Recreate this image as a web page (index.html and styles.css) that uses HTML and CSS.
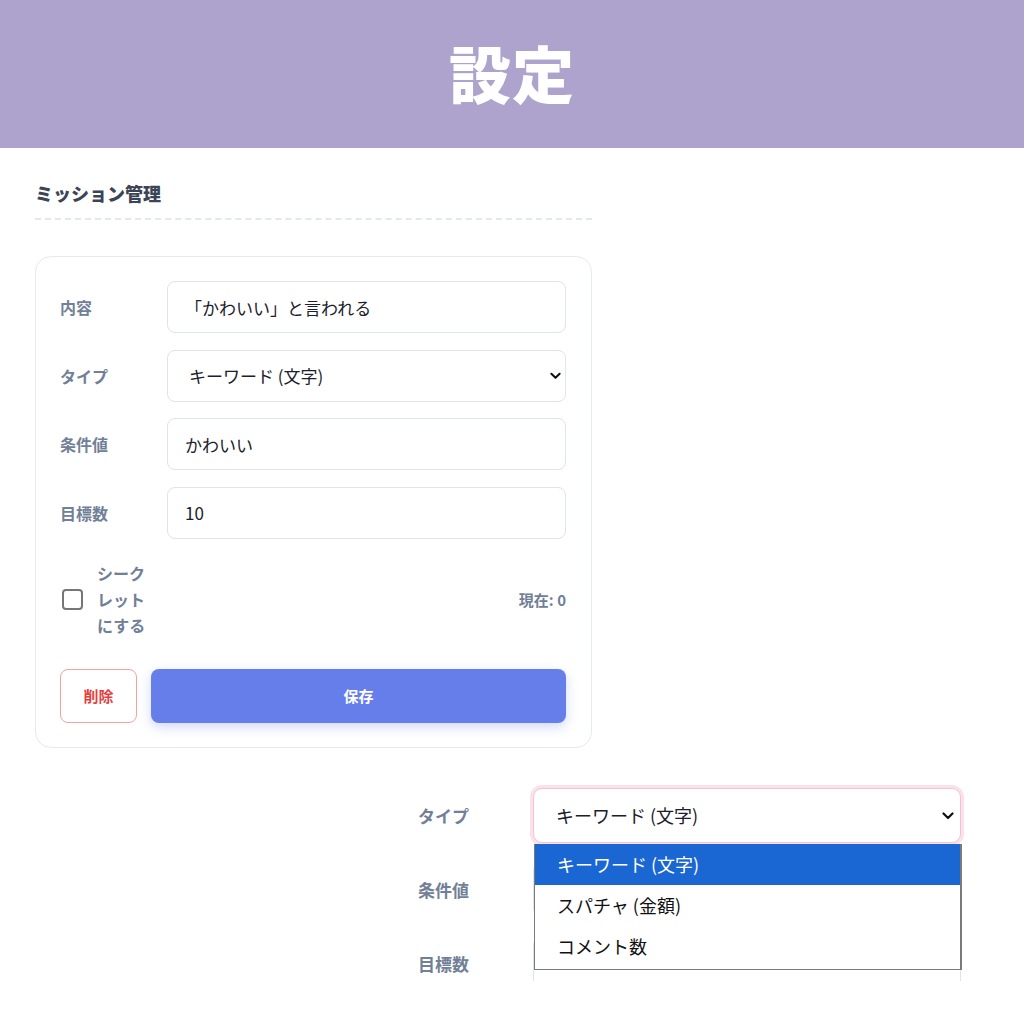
FILE: index.html
```html
<!DOCTYPE html>
<html lang="ja">
<head>
<meta charset="utf-8">
<title>設定</title>
<link rel="stylesheet" href="styles.css">
</head>
<body>
<header class="page-header">
  <h1 class="page-title">設定</h1>
</header>
<main class="content">
  <section class="mission">
    <h2 class="section-title">ミッション管理</h2>
    <div class="card">
      <div class="form-row">
        <label class="field-label">内容</label>
        <input class="field" type="text" value="「かわいい」と言われる">
      </div>
      <div class="form-row">
        <label class="field-label">タイプ</label>
        <div class="select-wrap">
          <select class="field select">
            <option selected>キーワード (文字)</option>
            <option>スパチャ (金額)</option>
            <option>コメント数</option>
          </select>
          <svg class="chevron" viewBox="0 0 12 8" width="12" height="8"><path d="M1.5 1.5 L6 6 L10.5 1.5" fill="none" stroke="#111" stroke-width="2.2" stroke-linecap="round" stroke-linejoin="round"/></svg>
        </div>
      </div>
      <div class="form-row">
        <label class="field-label">条件値</label>
        <input class="field" type="text" value="かわいい">
      </div>
      <div class="form-row">
        <label class="field-label">目標数</label>
        <input class="field" type="text" value="10">
      </div>
      <div class="secret-row">
        <label class="secret">
          <span class="checkbox"></span>
          <span class="secret-text">シークレットにする</span>
        </label>
        <span class="current">現在: 0</span>
      </div>
      <div class="actions">
        <button class="btn btn-delete">削除</button>
        <button class="btn btn-save">保存</button>
      </div>
    </div>
  </section>

  <section class="zoom-view">
    <div class="zoom-inner">
      <div class="z-row">
        <span class="z-label">タイプ</span>
        <div class="z-select-wrap">
          <div class="z-field z-focus">キーワード (文字)</div>
          <svg class="z-chevron" viewBox="0 0 12 8" width="12" height="8"><path d="M1.5 1.5 L6 6 L10.5 1.5" fill="none" stroke="#111" stroke-width="2.2" stroke-linecap="round" stroke-linejoin="round"/></svg>
          <ul class="dropdown">
            <li class="opt opt-active">キーワード (文字)</li>
            <li class="opt">スパチャ (金額)</li>
            <li class="opt">コメント数</li>
          </ul>
        </div>
      </div>
      <div class="z-row">
        <span class="z-label">条件値</span>
        <div class="z-field"></div>
      </div>
      <div class="z-row">
        <span class="z-label">目標数</span>
        <div class="z-field"></div>
      </div>
    </div>
  </section>
</main>
</body>
</html>
```

FILE: styles.css
```css
* { box-sizing: border-box; }
html, body { margin: 0; padding: 0; background: #fff; }
body {
  font-family: "Noto Sans CJK JP", "Noto Sans", sans-serif;
  color: #1a202c;
  width: 1024px;
  height: 1024px;
  overflow: hidden;
}

.page-header {
  height: 148px;
  background: #ada3cc;
  display: flex;
  align-items: center;
  justify-content: center;
}
.page-title {
  margin: 0;
  color: #fff;
  font-size: 62px;
  font-weight: 900;
  line-height: 1;
  letter-spacing: 1px;
  padding-bottom: 4px;
}

.content {
  padding: 0 35px;
}
.mission {
  width: 557px;
}
.section-title {
  margin: 0;
  padding-top: 30px;
  padding-bottom: 10px;
  font-size: 18px;
  font-weight: 900;
  line-height: 30px;
  color: #3b4556;
  border-bottom: 2px dashed #e2e8f0;
}

.card {
  margin-top: 36px;
  border: 1px solid #e5e9f0;
  border-radius: 16px;
  padding: 24px 25px 24px 24px;
  display: flex;
  flex-direction: column;
  gap: 16.6px;
}
.form-row {
  display: flex;
  align-items: center;
}
.field-label {
  width: 107px;
  flex: none;
  font-size: 16px;
  font-weight: 700;
  color: #718096;
}
.field {
  flex: 1;
  height: 52px;
  border: 1px solid #dfe3ea;
  border-radius: 8px;
  padding: 0 17px;
  font-family: "Noto Sans CJK JP", "Noto Sans", sans-serif;
  font-size: 17px;
  color: #1a202c;
  background: #fff;
  outline: none;
}
.select-wrap {
  flex: 1;
  position: relative;
  display: flex;
}
.select {
  appearance: none;
  -webkit-appearance: none;
  width: 100%;
  padding-left: 21px;
}
.chevron {
  position: absolute;
  right: 5px;
  top: 22px;
  width: 11px;
  height: 8px;
  pointer-events: none;
}

.secret-row {
  margin-top: 5px;
  display: flex;
  align-items: center;
  justify-content: space-between;
}
.secret {
  display: flex;
  align-items: center;
  gap: 14px;
  padding-left: 2px;
}
.checkbox {
  width: 21px;
  height: 21px;
  border: 2px solid #767676;
  border-radius: 4px;
  background: #fff;
  flex: none;
}
.secret-text {
  width: 56px;
  font-size: 16px;
  font-weight: 700;
  line-height: 26px;
  color: #718096;
}
.current {
  font-size: 15px;
  font-weight: 700;
  color: #718096;
}

.actions {
  margin-top: 14px;
  display: flex;
  gap: 14px;
}
.btn {
  height: 54px;
  border-radius: 8px;
  font-family: "Noto Sans CJK JP", "Noto Sans", sans-serif;
  font-size: 15px;
  font-weight: 700;
  cursor: pointer;
}
.btn-delete {
  width: 77px;
  background: #fff;
  border: 1px solid #f8a0a0;
  color: #e53e3e;
}
.btn-save {
  flex: 1;
  background: #667eea;
  border: none;
  color: #fff;
  box-shadow: 0 4px 12px rgba(102, 126, 234, 0.3);
}

.zoom-view {
  margin-top: 37px;
  height: 196px;
  overflow: hidden;
  padding-top: 3px;
}
.zoom-inner {
  padding-left: 383px;
  display: flex;
  flex-direction: column;
  gap: 19px;
  width: 926px;
}
.z-row {
  display: flex;
  align-items: center;
}
.z-label {
  width: 115px;
  flex: none;
  font-size: 17px;
  font-weight: 700;
  color: #718096;
}
.z-select-wrap {
  position: relative;
  flex: 1;
  display: flex;
}
.z-field {
  flex: 1;
  height: 55px;
  border: 1px solid #dfe3ea;
  border-radius: 9px;
  padding: 0 22px;
  display: flex;
  align-items: center;
  font-size: 18px;
  color: #1a202c;
  background: #fff;
}
.z-focus {
  border-color: #f3c2d6;
  box-shadow: 0 0 0 3px #fbe1ea;
}
.z-chevron {
  position: absolute;
  right: 7px;
  top: 24px;
  width: 12px;
  height: 8px;
}
.dropdown {
  position: absolute;
  top: 56px;
  left: 1px;
  right: -1px;
  margin: 0;
  padding: 0 0 2px;
  list-style: none;
  background: #fff;
  border: 1px solid #7a7a7a;
  border-top: none;
  border-right-width: 2px;
  z-index: 2;
}
.opt {
  height: 41px;
  line-height: 41px;
  padding-left: 22px;
  font-size: 18px;
  color: #111;
}
.opt-active {
  background: #1a66d2;
  color: #fff;
}
```
